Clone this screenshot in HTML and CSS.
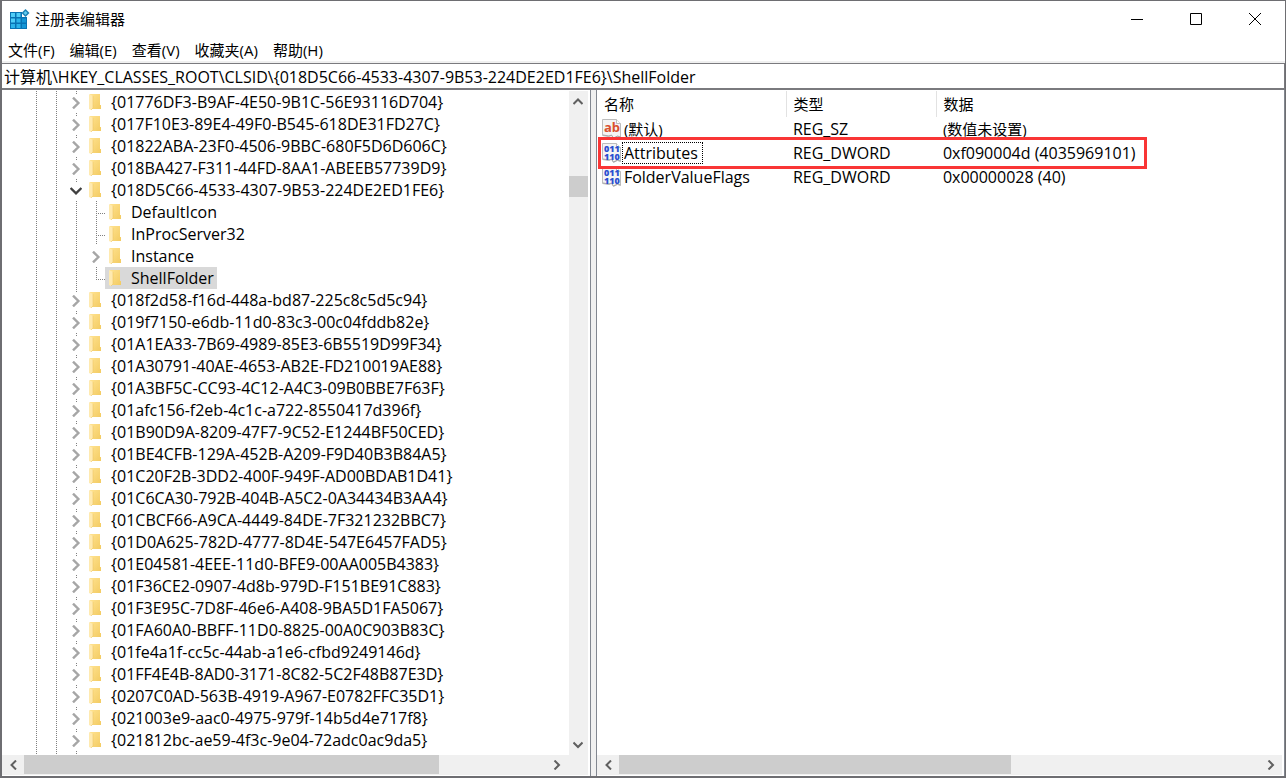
FILE: index.html
```
<!DOCTYPE html>
<html lang="zh-CN">
<head>
    <meta charset="UTF-8">
    <meta name="viewport" content="width=device-width, initial-scale=1.0">
    <title>注册表编辑器</title>
    <link rel="stylesheet" href="styles.css">
</head>
<body>
<svg class="defs" aria-hidden="true">
    <defs>
        <linearGradient id="folderFill" x1="0" y1="0" x2="1" y2="1">
            <stop offset="0" stop-color="#ffe28f"/>
            <stop offset="1" stop-color="#f3cb62"/>
        </linearGradient>
        <symbol id="folder" viewBox="0 0 12 16">
            <path d="M1 0h10v11h1v4H1z" fill="url(#folderFill)"/>
            <path d="M0 0l4 2v12l-2 2-2-1z" fill="#ffeab0"/>
            <path d="M4 2v12l-2 2" fill="none" stroke="#eec866" stroke-width=".6"/>
        </symbol>
        <symbol id="right" viewBox="0 0 10 10"><path d="M2.5 0.5L7 5 2.5 9.5" fill="none" stroke="currentColor" stroke-width="2"/></symbol>
        <symbol id="left" viewBox="0 0 10 10"><path d="M7 0.5L2.5 5 7 9.5" fill="none" stroke="currentColor" stroke-width="2"/></symbol>
        <symbol id="down" viewBox="0 0 10 10"><path d="M0.5 2.5L5 7 9.5 2.5" fill="none" stroke="currentColor" stroke-width="2"/></symbol>
        <symbol id="up" viewBox="0 0 10 10"><path d="M0.5 7L5 2.5 9.5 7" fill="none" stroke="currentColor" stroke-width="2"/></symbol>
        <symbol id="page" viewBox="0 0 20 20">
            <path d="M.5.5h14l4 4v14l-3-1-4 2-2-3-3 1-6-1z" fill="#f4f4f4" stroke="#bdbdbd"/>
            <path d="M14.500.500v4h4" fill="#fff" stroke="#bdbdbd"/>
            <path d="M1 16l6 1 2.500-1 2 3 4-2 3 1" fill="none" stroke="#a8a8a8"/>
        </symbol>
    </defs>
</svg>
<div class="window">
    <header class="titlebar">
        <svg class="app-icon" viewBox="0 0 20 20" aria-hidden="true">
            <path d="M0 3h12v5h5v12H0z" fill="#0873b4"/>
            <path d="M1 4h4v4H1zM6.500 4h4v4h-4zM1 9.500h4v4H1z" fill="#4fcdf7"/>
            <path d="M6.500 9.500h4v4h-4zM1 15h4v4H1zM6.500 15h4v4h-4z" fill="#2bb3ea"/>
            <path d="M12 9.500h4v4h-4zM12 15h4v4h-4z" fill="#1496d6"/>
            <path d="M15.500 0l4 4-4 4-4-4z" fill="#1c80b4"/>
            <path d="M15.500 2l2 2-2 2-2-2z" fill="#62cdf0"/>
        </svg>
        <h1>注册表编辑器</h1>
        <div class="caption-buttons">
            <button type="button" aria-label="最小化"><svg viewBox="0 0 12 12"><path d="M0 6.500h12" stroke="#000"/></svg></button>
            <button type="button" aria-label="最大化"><svg viewBox="0 0 12 12"><path d="M.5.5h11v11H.5z" fill="none" stroke="#000"/></svg></button>
            <button type="button" aria-label="关闭"><svg viewBox="0 0 12 12"><path d="M0 0l12 12M12 0L0 12" stroke="#000"/></svg></button>
        </div>
    </header>
    <nav class="menubar">
        <button type="button">文件(F)</button>
        <button type="button">编辑(E)</button>
        <button type="button">查看(V)</button>
        <button type="button">收藏夹(A)</button>
        <button type="button">帮助(H)</button>
    </nav>
    <input class="address" type="text" aria-label="地址" value="计算机\HKEY_CLASSES_ROOT\CLSID\{018D5C66-4533-4307-9B53-224DE2ED1FE6}\ShellFolder">
    <main class="panes">
        <section class="pane tree-pane">
            <div class="pane-row">
                <ul class="tree">
                    <li><button class="expander" aria-label="展开"><svg><use href="#right"/></svg></button><button class="key"><svg><use href="#folder"/></svg>{01776DF3-B9AF-4E50-9B1C-56E93116D704}</button></li>
                    <li><button class="expander" aria-label="展开"><svg><use href="#right"/></svg></button><button class="key"><svg><use href="#folder"/></svg>{017F10E3-89E4-49F0-B545-618DE31FD27C}</button></li>
                    <li><button class="expander" aria-label="展开"><svg><use href="#right"/></svg></button><button class="key"><svg><use href="#folder"/></svg>{01822ABA-23F0-4506-9BBC-680F5D6D606C}</button></li>
                    <li><button class="expander" aria-label="展开"><svg><use href="#right"/></svg></button><button class="key"><svg><use href="#folder"/></svg>{018BA427-F311-44FD-8AA1-ABEEB57739D9}</button></li>
                    <li><button class="expander open" aria-label="折叠"><svg><use href="#down"/></svg></button><button class="key"><svg><use href="#folder"/></svg>{018D5C66-4533-4307-9B53-224DE2ED1FE6}</button>
                        <ul class="subtree">
                            <li><span class="branch"></span><button class="key"><svg><use href="#folder"/></svg>DefaultIcon</button></li>
                            <li><span class="branch"></span><button class="key"><svg><use href="#folder"/></svg>InProcServer32</button></li>
                            <li><button class="expander" aria-label="展开"><svg><use href="#right"/></svg></button><button class="key"><svg><use href="#folder"/></svg>Instance</button></li>
                            <li><span class="branch last"></span><button class="key selected"><svg><use href="#folder"/></svg>ShellFolder</button></li>
                        </ul>
                    </li>
                    <li><button class="expander" aria-label="展开"><svg><use href="#right"/></svg></button><button class="key"><svg><use href="#folder"/></svg>{018f2d58-f16d-448a-bd87-225c8c5d5c94}</button></li>
                    <li><button class="expander" aria-label="展开"><svg><use href="#right"/></svg></button><button class="key"><svg><use href="#folder"/></svg>{019f7150-e6db-11d0-83c3-00c04fddb82e}</button></li>
                    <li><button class="expander" aria-label="展开"><svg><use href="#right"/></svg></button><button class="key"><svg><use href="#folder"/></svg>{01A1EA33-7B69-4989-85E3-6B5519D99F34}</button></li>
                    <li><button class="expander" aria-label="展开"><svg><use href="#right"/></svg></button><button class="key"><svg><use href="#folder"/></svg>{01A30791-40AE-4653-AB2E-FD210019AE88}</button></li>
                    <li><button class="expander" aria-label="展开"><svg><use href="#right"/></svg></button><button class="key"><svg><use href="#folder"/></svg>{01A3BF5C-CC93-4C12-A4C3-09B0BBE7F63F}</button></li>
                    <li><button class="expander" aria-label="展开"><svg><use href="#right"/></svg></button><button class="key"><svg><use href="#folder"/></svg>{01afc156-f2eb-4c1c-a722-8550417d396f}</button></li>
                    <li><button class="expander" aria-label="展开"><svg><use href="#right"/></svg></button><button class="key"><svg><use href="#folder"/></svg>{01B90D9A-8209-47F7-9C52-E1244BF50CED}</button></li>
                    <li><button class="expander" aria-label="展开"><svg><use href="#right"/></svg></button><button class="key"><svg><use href="#folder"/></svg>{01BE4CFB-129A-452B-A209-F9D40B3B84A5}</button></li>
                    <li><button class="expander" aria-label="展开"><svg><use href="#right"/></svg></button><button class="key"><svg><use href="#folder"/></svg>{01C20F2B-3DD2-400F-949F-AD00BDAB1D41}</button></li>
                    <li><button class="expander" aria-label="展开"><svg><use href="#right"/></svg></button><button class="key"><svg><use href="#folder"/></svg>{01C6CA30-792B-404B-A5C2-0A34434B3AA4}</button></li>
                    <li><button class="expander" aria-label="展开"><svg><use href="#right"/></svg></button><button class="key"><svg><use href="#folder"/></svg>{01CBCF66-A9CA-4449-84DE-7F321232BBC7}</button></li>
                    <li><button class="expander" aria-label="展开"><svg><use href="#right"/></svg></button><button class="key"><svg><use href="#folder"/></svg>{01D0A625-782D-4777-8D4E-547E6457FAD5}</button></li>
                    <li><button class="expander" aria-label="展开"><svg><use href="#right"/></svg></button><button class="key"><svg><use href="#folder"/></svg>{01E04581-4EEE-11d0-BFE9-00AA005B4383}</button></li>
                    <li><button class="expander" aria-label="展开"><svg><use href="#right"/></svg></button><button class="key"><svg><use href="#folder"/></svg>{01F36CE2-0907-4d8b-979D-F151BE91C883}</button></li>
                    <li><button class="expander" aria-label="展开"><svg><use href="#right"/></svg></button><button class="key"><svg><use href="#folder"/></svg>{01F3E95C-7D8F-46e6-A408-9BA5D1FA5067}</button></li>
                    <li><button class="expander" aria-label="展开"><svg><use href="#right"/></svg></button><button class="key"><svg><use href="#folder"/></svg>{01FA60A0-BBFF-11D0-8825-00A0C903B83C}</button></li>
                    <li><button class="expander" aria-label="展开"><svg><use href="#right"/></svg></button><button class="key"><svg><use href="#folder"/></svg>{01fe4a1f-cc5c-44ab-a1e6-cfbd9249146d}</button></li>
                    <li><button class="expander" aria-label="展开"><svg><use href="#right"/></svg></button><button class="key"><svg><use href="#folder"/></svg>{01FF4E4B-8AD0-3171-8C82-5C2F48B87E3D}</button></li>
                    <li><button class="expander" aria-label="展开"><svg><use href="#right"/></svg></button><button class="key"><svg><use href="#folder"/></svg>{0207C0AD-563B-4919-A967-E0782FFC35D1}</button></li>
                    <li><button class="expander" aria-label="展开"><svg><use href="#right"/></svg></button><button class="key"><svg><use href="#folder"/></svg>{021003e9-aac0-4975-979f-14b5d4e717f8}</button></li>
                    <li><button class="expander" aria-label="展开"><svg><use href="#right"/></svg></button><button class="key"><svg><use href="#folder"/></svg>{021812bc-ae59-4f3c-9e04-72adc0ac9da5}</button></li>
                </ul>
                <div class="scrollbar vertical">
                    <button aria-label="向上滚动"><svg><use href="#up"/></svg></button>
                    <div class="track"><div class="thumb"></div></div>
                    <button aria-label="向下滚动"><svg><use href="#down"/></svg></button>
                </div>
            </div>
            <div class="scrollbar horizontal">
                <button aria-label="向左滚动"><svg><use href="#left"/></svg></button>
                <div class="track"><div class="thumb"></div></div>
                <button aria-label="向右滚动"><svg><use href="#right"/></svg></button>
            </div>
        </section>
        <section class="pane list-pane">
            <div class="list">
                <table>
                    <thead>
                        <tr><th class="name">名称</th><th class="type">类型</th><th>数据</th></tr>
                    </thead>
                    <tbody>
                        <tr>
                            <td class="name"><div class="value"><svg viewBox="0 0 20 20"><use href="#page"/><text class="ab" x="2" y="13">ab</text></svg><span class="zh">(默认)</span></div></td>
                            <td>REG_SZ</td><td class="zh">(数值未设置)</td>
                        </tr>
                        <tr class="marked">
                            <td class="name"><div class="value focused"><svg viewBox="0 0 20 20"><use href="#page"/><text class="bits"><tspan x="2" y="9">011</tspan><tspan x="2" y="17">110</tspan></text></svg><span>Attributes</span></div></td>
                            <td>REG_DWORD</td><td>0xf090004d (4035969101)</td>
                        </tr>
                        <tr>
                            <td class="name"><div class="value"><svg viewBox="0 0 20 20"><use href="#page"/><text class="bits"><tspan x="2" y="9">011</tspan><tspan x="2" y="17">110</tspan></text></svg><span>FolderValueFlags</span></div></td>
                            <td>REG_DWORD</td><td>0x00000028 (40)</td>
                        </tr>
                    </tbody>
                </table>
            </div>
            <div class="scrollbar horizontal">
                <button aria-label="向左滚动"><svg><use href="#left"/></svg></button>
                <div class="track"><div class="thumb"></div></div>
                <button aria-label="向右滚动"><svg><use href="#right"/></svg></button>
            </div>
        </section>
    </main>
</div>
</body>
</html>
```
FILE: styles.css
```
* { box-sizing: border-box; }
body { margin: 0; color: #000; background: #fff; font: 16px/22px "Open Sans", "Noto Sans CJK SC", sans-serif; }
button { padding: 0; border: 0; background: none; color: inherit; font: inherit; }
svg { display: block; flex: none; }
ul { margin: 0; padding: 0; list-style: none; }
.defs { position: absolute; width: 0; height: 0; }

.window { display: flex; flex-direction: column; height: 100vh; border: 1px solid #6e6e72; border-width: 1px 1px 2px 2px; }

.titlebar { display: flex; align-items: center; height: 36px; padding: 0 1px 0 8px; }
.titlebar h1 { flex: 1; margin: 0 0 0 5px; font-size: 15px; font-weight: normal; }
.app-icon { width: 20px; height: 20px; }
.caption-buttons { display: flex; }
.caption-buttons button { display: flex; align-items: center; justify-content: center; width: 59px; height: 36px; }
.caption-buttons svg { width: 12px; height: 12px; }

.menubar { display: flex; height: 26px; padding: 1px 0 0 6px; gap: 15px; border-bottom: 2px solid #f0f0f0; font-size: 15px; }

.address { width: 100%; height: 27px; padding: 0 2px; border: solid #7a7a7e; border-width: 1px 1px 2px 0; background: #fff; color: #000; font: inherit; outline: 0; }

.panes { display: flex; flex: 1; min-height: 0; background: #f0f0f0; }
.pane { display: flex; flex-direction: column; min-width: 0; padding: 1px 2px 1px 1px; border-right: 1px solid #828790; background: #fff; }
.tree-pane { flex: 0 0 45.9%; padding-left: 0; }
.list-pane { flex: 1; margin-left: 5px; padding-left: 0; border-left: 1px solid #828790; }
.pane-row { display: flex; flex: 1; min-height: 0; }

/* dotted guide lines of the parent levels */
.tree {
    flex: 1;
    overflow: hidden;
    background:
        repeating-linear-gradient(#808080 0 1px, transparent 1px 2px) 34px 0 / 1px 100% no-repeat,
        repeating-linear-gradient(#808080 0 1px, transparent 1px 2px) 54px 0 / 1px 100% no-repeat,
        repeating-linear-gradient(#808080 0 1px, transparent 1px 2px) 74px 0 / 1px 100% no-repeat;
}
.tree li { display: flex; flex-wrap: wrap; padding-left: 65px; }
.tree .subtree { width: 100%; }
.tree .subtree li { padding-left: 20px; }
.expander { display: flex; align-items: center; justify-content: center; width: 18px; height: 18px; margin: 3px 0 1px; background: #fff; color: #a6a6a6; }
.expander.open { color: #404040; }
.expander svg { width: 12px; height: 12px; }
.branch {
    width: 18px;
    height: 22px;
    background:
        repeating-linear-gradient(#808080 0 1px, transparent 1px 2px) 9px 0 / 1px 100% no-repeat,
        repeating-linear-gradient(90deg, #808080 0 1px, transparent 1px 2px) 9px 12px / 9px 1px no-repeat;
}
.branch.last { background-size: 1px 12px, 9px 1px; }
.key { display: flex; align-items: center; height: 22px; padding: 0 4px; gap: 10px; white-space: nowrap; }
.key svg { width: 12px; height: 16px; }
.key.selected { padding-right: 3px; background: #d9d9d9; }

.scrollbar { display: flex; background: #f0f0f0; color: #606060; }
.scrollbar button { display: flex; align-items: center; justify-content: center; width: 20px; height: 19px; }
.scrollbar svg { width: 10px; height: 10px; }
.track { flex: 1; }
.thumb { background: #cdcdcd; }
.vertical { flex-direction: column; width: 19px; padding: 1px 0; }
.vertical button { width: 19px; }
.vertical .thumb { height: 21px; margin-top: 65px; }
.horizontal { height: 20px; padding: 0 1px 1px 2px; }
.horizontal .thumb { width: 79.4%; height: 19px; }
.tree-pane .horizontal { padding-right: 21px; }
.list-pane .horizontal .thumb { width: 61%; }

.list { flex: 1; min-height: 0; overflow: hidden; }
.list table { width: 100%; border-collapse: collapse; table-layout: fixed; }
.list th { height: 26px; padding: 0 0 0 6px; border-right: 1px solid #e2e2e2; font-size: 15px; font-weight: normal; text-align: left; }
.list th:last-child { border-right: 0; }
.list th.name { width: 190px; padding-left: 7px; }
.list th.type { width: 150px; }
.list td { height: 24px; padding: 0 0 0 6px; white-space: nowrap; }
.list td.name { padding-left: 5px; }
.list .zh { font-size: 15px; }
.value { display: flex; align-items: center; }
.value svg { width: 20px; height: 20px; overflow: visible; }
.value span { padding: 0 4px 0 1px; border: 1px dotted transparent; line-height: 20px; }
.value.focused span { border-color: #000; }
.ab { font: bold 13px "Open Sans", sans-serif; fill: #d9502e; }
.bits { font: 800 9px "Open Sans", sans-serif; fill: #2b4fd0; }

/* red frame over the row that matters */
.marked { position: relative; }
.marked::after { content: ""; position: absolute; top: -4px; left: 1px; box-sizing: border-box; width: 549px; height: 32px; border: 3px solid #f93535; pointer-events: none; }
```
